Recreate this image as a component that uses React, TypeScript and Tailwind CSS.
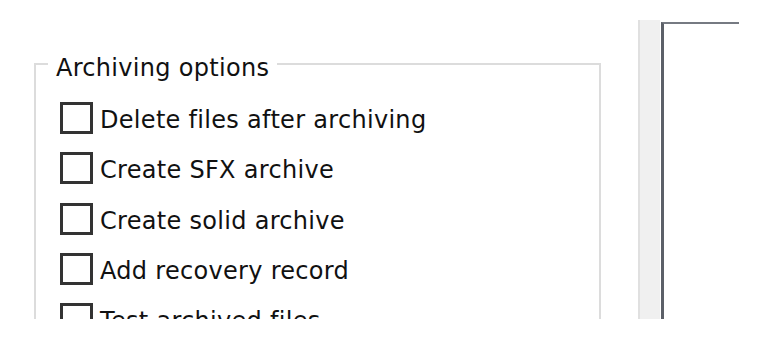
import React from "react";

const items = [
  "Delete files after archiving",
  "Create SFX archive",
  "Create solid archive",
  "Add recovery record",
  "Test archived files",
];

export default function App() {
  return (
    <div className="w-[760px] h-[340px] bg-white overflow-hidden font-['DejaVu_Sans',sans-serif] text-[#111111]">
      <div className="h-[319px] overflow-hidden flex">
        <div className="w-[638px] shrink-0 pl-[34px] pt-[48px]">
          <fieldset className="w-[567px] h-[400px] min-w-0 border-2 border-[#dcdcdc]">
            <legend className="ml-[12px] px-[8px] pt-[8px] text-[24px] leading-[24px] tracking-[0.3px]">
              Archiving options
            </legend>
            <div className="pt-[22px] pl-[24px] flex flex-col gap-[14.25px]">
              {items.map((t) => (
                <label key={t} className="flex items-start gap-[7px]">
                  <span className="w-[33px] h-[32px] shrink-0 border-[3px] border-[#333333] bg-white" />
                  <span className="text-[24px] leading-[36px] tracking-[0.3px] whitespace-nowrap">{t}</span>
                </label>
              ))}
            </div>
          </fieldset>
        </div>
        <div className="w-[22px] shrink-0 mt-[20px] bg-[#f0f0f0] border-l-2 border-[#e0e0e0]" />
        <div className="w-[78px] shrink-0 ml-[1px] mt-[22px] border-l-[3px] border-t-2 border-l-[#5c6068] border-t-[#767a82] bg-white" />
      </div>
    </div>
  );
}
